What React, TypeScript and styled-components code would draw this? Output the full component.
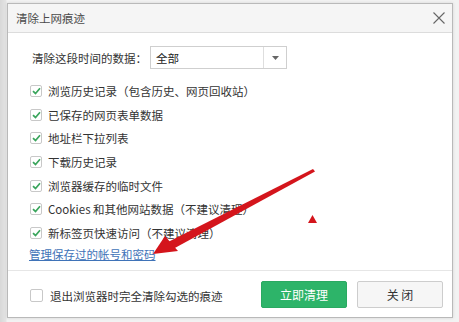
import React from "react";
import styled, { createGlobalStyle } from "styled-components";

const Global = createGlobalStyle`
  html, body { margin: 0; padding: 0; }
  body {
    background: #ececec;
    font-family: "Microsoft YaHei", "Noto Sans CJK SC", "Noto Sans", sans-serif;
    color: #333;
  }
`;

const Page = styled.div`
  width: 459px;
  height: 322px;
  overflow: hidden;
  padding: 3px 0 0 7px;
  box-sizing: border-box;
  background: linear-gradient(to right, #d8d8d8 0px, #e4e4e4 6px, #f2f2f2 7px);
`;

const Dialog = styled.div`
  position: relative;
  width: 446px;
  height: 315px;
  box-sizing: border-box;
  border: 1px solid #b9b9b9;
  background: #fff;
  display: flex;
  flex-direction: column;
  box-shadow: 0 0 3px rgba(0, 0, 0, 0.12);
`;

const TitleBar = styled.div`
  height: 28px;
  flex: none;
  background: #f5f5f5;
  border-bottom: 1px solid #dcdcdc;
  display: flex;
  align-items: center;
  justify-content: space-between;
  padding: 0 5px 0 8px;
  font-size: 11.5px;
  color: #4a4a4a;
`;

const CloseBtn = styled.div`
  width: 16px;
  height: 16px;
  display: flex;
  align-items: center;
  justify-content: center;
`;

const Body = styled.div`
  flex: 1;
  padding: 13px 0 0 22px;
  display: flex;
  flex-direction: column;
`;

const SelectRow = styled.div`
  display: flex;
  align-items: center;
  height: 23px;
  padding-left: 2px;
  font-size: 11.5px;
  color: #333;
  margin-bottom: 10px;
`;

const Label = styled.div`
  width: 118px;
`;

const Select = styled.div`
  width: 137px;
  height: 23px;
  box-sizing: border-box;
  border: 1px solid #cfcfcf;
  display: flex;
  align-items: center;
`;

const SelectValue = styled.div`
  flex: 1;
  padding-left: 5px;
  font-size: 11.5px;
  color: #222;
`;

const SelectArrow = styled.div`
  width: 22px;
  height: 100%;
  border-left: 1px solid #dedede;
  display: flex;
  align-items: center;
  justify-content: center;
`;

const Row = styled.div`
  height: 23.7px;
  display: flex;
  align-items: center;
  font-size: 11.5px;
  color: #333;
`;

const Box = styled.div<{ $checked?: boolean; $size?: number }>`
  width: ${(p) => p.$size ?? 12}px;
  height: ${(p) => p.$size ?? 12}px;
  box-sizing: border-box;
  border: 1px solid #c8c8c8;
  border-radius: 2px;
  background: #fff;
  display: flex;
  align-items: center;
  justify-content: center;
  margin-right: ${(p) => (p.$size ? 7 : 6)}px;
  flex: none;
`;

const Link = styled.a`
  display: block;
  height: 18px;
  line-height: 18px;
  margin-left: -1px;
  font-size: 11.5px;
  color: #3f73b8;
  text-decoration: underline;
`;

const Footer = styled.div`
  height: 46px;
  flex: none;
  border-top: 1px solid #e6e6e6;
  display: flex;
  align-items: center;
  padding: 0 9px 0 22px;
  font-size: 11.5px;
  color: #333;
`;

const FooterCheck = styled.div`
  flex: 1;
  display: flex;
  align-items: center;
  padding-top: 3px;
`;

const Button = styled.div<{ $primary?: boolean }>`
  width: 86px;
  height: 27px;
  box-sizing: border-box;
  border-radius: 2px;
  display: flex;
  align-items: center;
  justify-content: center;
  font-size: 12px;
  margin-left: ${(p) => (p.$primary ? 0 : 10)}px;
  background: ${(p) => (p.$primary ? "#2db469" : "#f6f6f6")};
  color: ${(p) => (p.$primary ? "#fff" : "#333")};
  border: 1px solid ${(p) => (p.$primary ? "#2aa961" : "#cdcdcd")};
`;

const Overlay = styled.svg`
  position: absolute;
  left: -8px;
  top: -4px;
  width: 459px;
  height: 322px;
  pointer-events: none;
`;

const Check = () => (
  <svg width="9" height="8" viewBox="0 0 9 8">
    <path d="M1 4.2 L3.5 6.5 L8 1.3" fill="none" stroke="#3aa55c" strokeWidth="1.7" />
  </svg>
);

const items = [
  "浏览历史记录（包含历史、网页回收站）",
  "已保存的网页表单数据",
  "地址栏下拉列表",
  "下载历史记录",
  "浏览器缓存的临时文件",
  "Cookies 和其他网站数据（不建议清理）",
  "新标签页快速访问（不建议清理）",
];

export default function App() {
  return (
    <>
      <Global />
      <Page>
        <Dialog>
          <TitleBar>
            <span>清除上网痕迹</span>
            <CloseBtn>
              <svg width="12" height="12" viewBox="0 0 12 12">
                <path d="M0.5 0.5 L11.5 11.5 M11.5 0.5 L0.5 11.5" stroke="#666" strokeWidth="1.1" />
              </svg>
            </CloseBtn>
          </TitleBar>
          <Body>
            <SelectRow>
              <Label>清除这段时间的数据：</Label>
              <Select>
                <SelectValue>全部</SelectValue>
                <SelectArrow>
                  <svg width="7" height="4" viewBox="0 0 7 4">
                    <path d="M0 0 L7 0 L3.5 4 Z" fill="#666" />
                  </svg>
                </SelectArrow>
              </Select>
            </SelectRow>
            {items.map((t) => (
              <Row key={t}>
                <Box $checked>
                  <Check />
                </Box>
                {t}
              </Row>
            ))}
            <Link>管理保存过的帐号和密码</Link>
          </Body>
          <Footer>
            <FooterCheck>
              <Box $size={13} />
              退出浏览器时完全清除勾选的痕迹
            </FooterCheck>
            <Button $primary>立即清理</Button>
            <Button>关 闭</Button>
          </Footer>
          <Overlay viewBox="0 0 459 322">
            <polygon points="313,169 315,171.5 173,249 168,242" fill="#d4151c" />
            <polygon points="153,254 165,236 178,251" fill="#d4151c" />
            <polygon points="312.5,215 308,223 317,223" fill="#d4151c" />
          </Overlay>
        </Dialog>
      </Page>
    </>
  );
}
